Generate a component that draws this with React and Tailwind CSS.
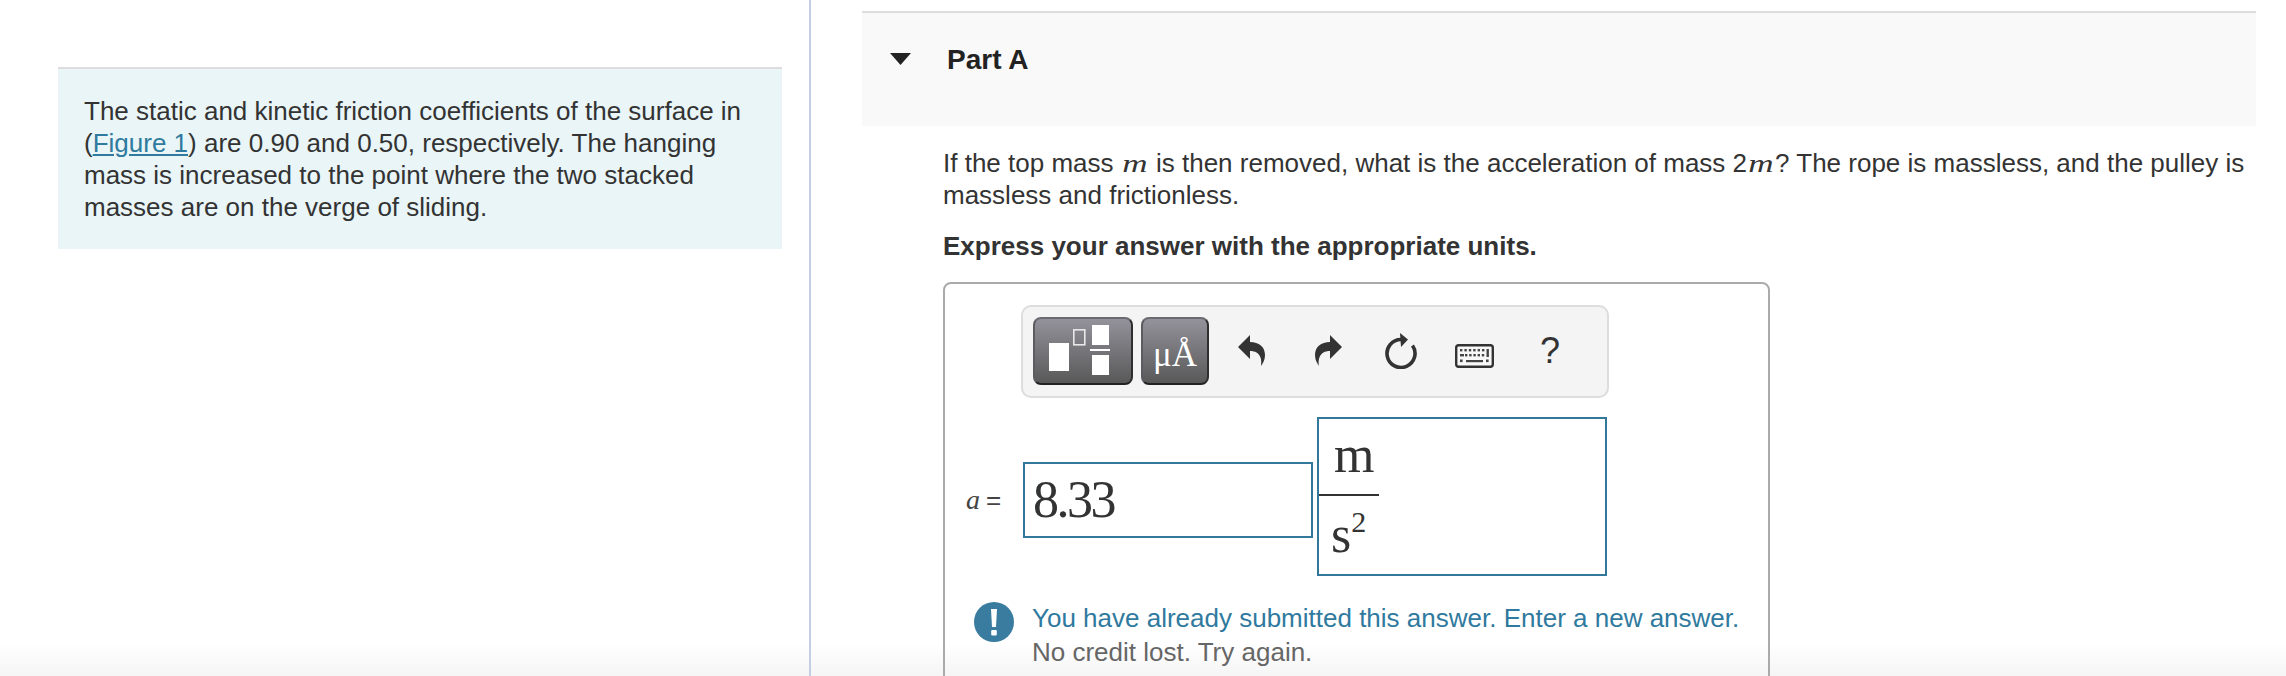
const sans = "font-['Liberation_Sans',Arial,sans-serif]";

function MathM() {
  return (
    <span className="inline-block w-[28px] text-center font-['Liberation_Serif',serif] italic text-[26px] leading-[20px] scale-x-[1.35]">m</span>
  );
}

function UndoIcon({ flip }) {
  return (
    <svg width="27" height="31" viewBox="0 0 27 31" className={flip ? "-scale-x-100" : ""}>
      <path d="M0 12 L12 0 L12 7 C21 7 27 12 27 20 C27 25 25 28 23 31 C24 25 23 16 12 16 L12 24 Z" fill="#333" />
    </svg>
  );
}

function ResetIcon() {
  return (
    <svg width="32" height="36" viewBox="0 0 32 36">
      <path d="M16 6.5 A14 14 0 1 0 27.5 12.5" fill="none" stroke="#333" strokeWidth="3.6" />
      <path d="M15 0 L23 6.5 L16 14 Z" fill="#333" />
    </svg>
  );
}

function KeyboardIcon() {
  const dots = [];
  for (let i = 0; i < 6; i++) dots.push(<rect key={"a" + i} x={5 + i * 4.4} y="5" width="2.4" height="2.4" fill="#444" />);
  for (let i = 0; i < 5; i++) dots.push(<rect key={"b" + i} x={10 + i * 4.2} y="10" width="2.4" height="2.4" fill="#444" />);
  return (
    <svg width="39" height="24" viewBox="0 0 39 24">
      <rect x="1.2" y="1.2" width="36.6" height="21.6" rx="2.5" fill="#f8f8f8" stroke="#333" strokeWidth="2.4" />
      {dots}
      <rect x="5" y="10" width="4" height="2.4" fill="#444" />
      <rect x="31.5" y="5" width="2.4" height="8" fill="#444" />
      <rect x="5" y="15.5" width="2.6" height="2.6" fill="#444" />
      <rect x="11" y="16" width="17" height="2.2" fill="#444" />
      <rect x="31" y="15.5" width="2.6" height="2.6" fill="#444" />
    </svg>
  );
}

function TemplatesGlyph() {
  return (
    <svg width="96" height="64" viewBox="0 0 96 64">
      <rect x="14" y="24" width="20" height="28" fill="#fff" />
      <rect x="38.8" y="10.8" width="11" height="15" fill="none" stroke="#e8e8e8" strokeWidth="1.6" />
      <rect x="57" y="6" width="17" height="20" fill="#fff" />
      <rect x="55" y="30" width="20" height="2" fill="#fff" />
      <rect x="57" y="36" width="17" height="20" fill="#fff" />
    </svg>
  );
}

export default function App() {
  return (
    <div className={`relative h-[676px] w-[2286px] overflow-hidden bg-white text-[#333] ${sans} text-[26px] leading-[32px]`}>
      <div className="absolute inset-x-0 bottom-0 h-[33px] bg-gradient-to-b from-white to-[#f5f5f5]" />
      <div className="relative z-10 flex h-full">
        <aside className="w-[811px] shrink-0 border-r-2 border-[#c3cfe0] pl-[58px] pt-[67px]">
          <div className="w-[724px] border-t-2 border-[#dddddd] bg-[#e9f5f7] px-[26px] py-[26px]">
            <p>
              The static and kinetic friction coefficients of the surface in (
              <a className="text-[#2f7a9e] underline">Figure 1</a>
              ) are 0.90 and 0.50, respectively. The hanging mass is increased to the point where the two stacked masses are on the verge of sliding.
            </p>
          </div>
        </aside>

        <main className="w-[1475px] shrink-0 pl-[51px] pr-[30px] pt-[11px]">
          <header className="flex h-[115px] items-start border-t-2 border-[#dddddd] bg-[#f9f9f9] pl-[28px] pt-[31px]">
            <svg width="21" height="12" viewBox="0 0 21 12" className="mt-[9px]">
              <path d="M0 0 H21 L10.5 12 Z" fill="#222" />
            </svg>
            <h2 className="ml-[36px] text-[28px] font-bold leading-[32px] text-[#222]">Part A</h2>
          </header>

          <div className="pl-[81px] pt-[21px]">
            <p>
              If the top mass <MathM /> is then removed, what is the acceleration of mass 2<MathM />? The rope is massless, and the pulley is massless and frictionless.
            </p>
            <p className="mt-[19px] font-bold">Express your answer with the appropriate units.</p>

            <section className="mt-[20px] h-[420px] w-[827px] rounded-[8px] border-2 border-[#aaaaaa] pl-[76px] pt-[21px]">
              <div className="flex h-[93px] w-[588px] items-start rounded-[10px] border-2 border-[#dddddd] bg-[#f4f4f4] pl-[10px] pt-[10px]">
                <button className="flex h-[68px] w-[100px] items-center justify-center rounded-[8px] border-2 border-t-[#6a6a70] border-l-[#5c5c60] border-r-[#2e2e2e] border-b-[#222] bg-gradient-to-b from-[#94929b] to-[#595959]">
                  <TemplatesGlyph />
                </button>
                <button className="ml-[8px] flex h-[68px] w-[68px] items-end justify-center rounded-[8px] border-2 border-t-[#6a6a70] border-l-[#5c5c60] border-r-[#2e2e2e] border-b-[#222] bg-gradient-to-b from-[#94929b] to-[#595959] pb-[8px] font-['Liberation_Serif',serif] text-[35px] leading-[40px] text-white">
                  μÅ
                </button>
                <span className="ml-[29px] mt-[18px] flex"><UndoIcon /></span>
                <span className="ml-[50px] mt-[18px] flex"><UndoIcon flip /></span>
                <span className="ml-[43px] mt-[16px] flex"><ResetIcon /></span>
                <span className="ml-[38px] mt-[27px] flex"><KeyboardIcon /></span>
                <span className="ml-[46px] mt-[14px] text-[36px] leading-[40px]">?</span>
              </div>

              <div className="mt-[19px] flex items-start">
                <div className="ml-[-55px] mt-[45px] flex h-[76px] w-[57px] items-center font-['Liberation_Serif',serif] text-[28px] text-[#444]">
                  <i>a</i><span className="ml-[6px] font-['Liberation_Sans',sans-serif] text-[26px]">=</span>
                </div>
                <div className="mt-[45px] flex h-[76px] w-[290px] items-center border-2 border-[#33789b] pl-[8px] font-['Liberation_Serif',serif] text-[52px] leading-[50px] tracking-[-2.5px]">
                  8.33
                </div>
                <div className="ml-[4px] h-[159px] w-[290px] border-2 border-[#33789b] font-['Liberation_Serif',serif] text-[52px]">
                  <div className="w-[60px]">
                    <div className="h-[75px] pl-[15px] pt-[11px] leading-[50px]">m</div>
                    <div className="h-[2px] bg-[#333]" />
                    <div className="pl-[12px] pt-[14px] leading-[50px]">s<sup className="relative top-[-20px] align-baseline text-[30px] leading-none">2</sup></div>
                  </div>
                </div>
              </div>

              <div className="ml-[-47px] mt-[25px] flex items-start leading-[34px]">
                <svg width="40" height="40" viewBox="0 0 40 40" className="mt-[1px] shrink-0">
                  <circle cx="20" cy="20" r="20" fill="#3a7c9f" />
                  <path d="M17 7 H23 L22 25 H18 Z" fill="#fff" />
                  <rect x="17.2" y="28" width="5.6" height="5.6" rx="1" fill="#fff" />
                </svg>
                <div className="ml-[18px] w-[720px] shrink-0">
                  <p className="text-[#2f7a9e]">You have already submitted this answer. Enter a new answer.</p>
                  <p className="text-[#666]">No credit lost. Try again.</p>
                </div>
              </div>
            </section>
          </div>
        </main>
      </div>
    </div>
  );
}
